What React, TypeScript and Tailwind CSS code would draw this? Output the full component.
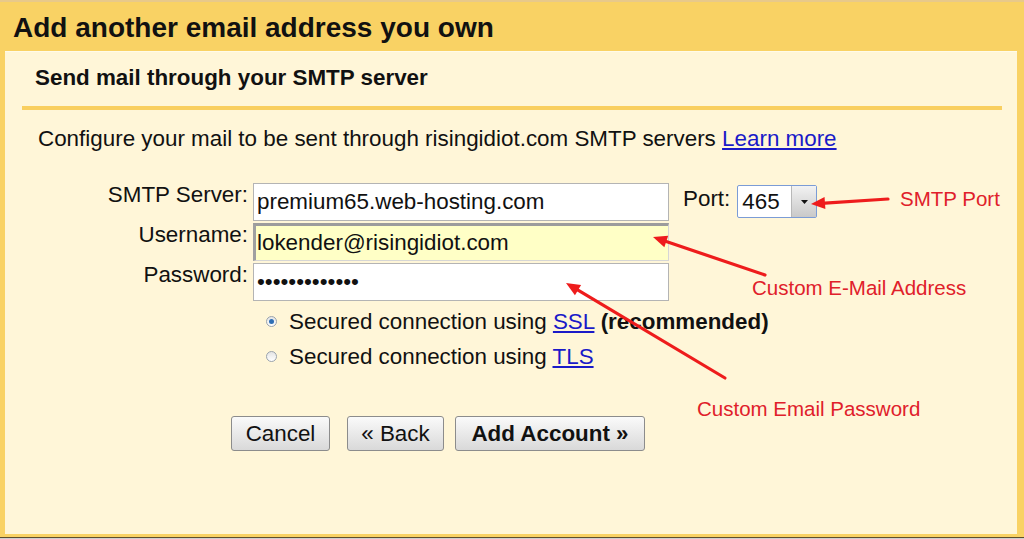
import type { ReactNode } from "react";

const font = "font-['Liberation_Sans',Arial,sans-serif]";

function Arrow({ x1, y1, x2, y2 }: { x1: number; y1: number; x2: number; y2: number }) {
  // arrow from (x1,y1) pointing at (x2,y2)
  const dx = x2 - x1;
  const dy = y2 - y1;
  const len = Math.hypot(dx, dy);
  const ux = dx / len;
  const uy = dy / len;
  const headLen = 14;
  const headW = 6;
  const bx = x2 - ux * headLen;
  const by = y2 - uy * headLen;
  const px = -uy * headW;
  const py = ux * headW;
  return (
    <g>
      <line x1={x1} y1={y1} x2={bx} y2={by} stroke="#ee1c1c" strokeWidth={3.2} strokeLinecap="round" />
      <polygon points={`${x2},${y2} ${bx + px},${by + py} ${bx - px},${by - py}`} fill="#ee1c1c" />
    </g>
  );
}

function Label({ children }: { children: ReactNode }) {
  return <div className="w-[243px] shrink-0 text-right leading-[24px] text-[#111]">{children}</div>;
}

function Radio({ checked }: { checked?: boolean }) {
  return (
    <span className="flex h-[11px] w-[11px] shrink-0 items-center justify-center rounded-full border border-[#9aa3ad] bg-gradient-to-b from-[#e4e4e4] to-[#ffffff]">
      {checked ? <span className="h-[5px] w-[5px] rounded-full bg-[#2f6fb5]" /> : null}
    </span>
  );
}

function Btn({ children, className = "" }: { children: ReactNode; className?: string }) {
  return (
    <button
      className={`h-[35px] rounded-[3px] border border-[#8c8c8c] bg-gradient-to-b from-[#fafafa] to-[#d9d9d9] text-[22.4px] leading-[33px] text-[#111] ${className}`}
    >
      {children}
    </button>
  );
}

export default function App() {
  return (
    <div className={`relative h-[539px] w-[1024px] overflow-hidden bg-[#cfcfcf] ${font} text-[22.4px] text-[#111]`}>
      <div className="h-[2px] bg-[#e8c98a]" />
      <div className="h-[49px] bg-[#f9d264] pl-[13px] pt-[1px] text-[28px] font-bold leading-[49px] text-[#111]">
        Add another email address you own
      </div>

      <div className="h-[486px] border-b-[3px] border-l-[5px] border-r-[7px] border-[#f9d264] bg-[#fff6d8]">
        <div className="border-t border-[#fffbe9] pl-[30px] pt-[13px] text-[22.4px] font-bold leading-[26px]">
          Send mail through your SMTP server
        </div>
        <div className="ml-[17px] mr-[15px] mt-[15px] h-[4px] bg-[#f9cf5f]" />
        <div className="mt-[16px] pl-[33px] leading-[26px]">
          Configure your mail to be sent through risingidiot.com SMTP servers{" "}
          <a href="#" className="text-[#1a1ac8] underline">
            Learn more
          </a>
        </div>

        <div className="mt-[31px] flex flex-col gap-[2px]">
          <div className="flex items-start">
            <Label>SMTP Server:</Label>
            <input
              readOnly
              value="premium65.web-hosting.com"
              className="ml-[5px] h-[38px] w-[416px] border border-[#b4b4b4] bg-white pl-[3px] text-[22.4px] text-[#111] outline-none"
            />
            <span className="ml-[14px] mt-[4px] leading-[24px]">Port:</span>
            <div className="ml-[7px] mt-[2px] flex h-[33px] w-[80px] rounded-[2px] border border-[#7b9cd6] bg-white">
              <span className="flex-1 pl-[4px] leading-[31px]">465</span>
              <span className="flex w-[25px] items-center justify-center border-l border-[#b8b8b8] bg-gradient-to-b from-[#f2f2f2] to-[#c9c9c9]">
                <svg width="7" height="4" viewBox="0 0 7 4">
                  <polygon points="0,0 7,0 3.5,4" fill="#111" />
                </svg>
              </span>
            </div>
          </div>
          <div className="flex items-start">
            <Label>Username:</Label>
            <input
              readOnly
              value="lokender@risingidiot.com"
              className="ml-[5px] h-[38px] w-[416px] border-b border-l-[3px] border-r border-t-[3px] border-b-[#d6d6d6] border-l-[#a0a0a0] border-r-[#d6d6d6] border-t-[#9c9c9c] bg-[#ffffc6] pl-[1px] text-[22.4px] text-[#111] outline-none"
            />
          </div>
          <div className="flex items-start">
            <Label>Password:</Label>
            <input
              readOnly
              value="•••••••••••••"
              className="ml-[5px] h-[38px] w-[416px] border border-[#b4b4b4] bg-white pl-[3px] text-[22.4px] text-[#111] outline-none"
            />
          </div>
        </div>

        <div className="mt-[3px] pl-[261px]">
          <div className="flex h-[35px] items-center leading-[35px]">
            <Radio checked />
            <span className="ml-[12px]">
              Secured connection using{" "}
              <a href="#" className="text-[#1a1ac8] underline">
                SSL
              </a>{" "}
              <b>(recommended)</b>
            </span>
          </div>
          <div className="flex h-[35px] items-center leading-[35px]">
            <Radio />
            <span className="ml-[12px]">
              Secured connection using{" "}
              <a href="#" className="text-[#1a1ac8] underline">
                TLS
              </a>
            </span>
          </div>
        </div>

        <div className="mt-[42px] flex pl-[226px]">
          <Btn className="w-[99px]">Cancel</Btn>
          <Btn className="ml-[17px] w-[97px]">« Back</Btn>
          <Btn className="ml-[11px] w-[190px] font-bold">Add Account »</Btn>
        </div>
      </div>
      <div className="h-[1px] bg-[#5e4e2e]" />

      {/* annotations drawn over the screenshot */}
      <svg className="pointer-events-none absolute left-0 top-0" width="1024" height="539">
        <Arrow x1={888} y1={199} x2={811} y2={204} />
        <Arrow x1={765} y1={275} x2={653} y2={237} />
        <Arrow x1={725} y1={378} x2={566} y2={283} />
      </svg>
      <div className="absolute left-[900px] top-[187px] text-[20.5px] leading-[24px] text-[#e0202a]">SMTP Port</div>
      <div className="absolute left-[752px] top-[276px] text-[20.5px] leading-[24px] text-[#e0202a]">
        Custom E-Mail Address
      </div>
      <div className="absolute left-[697px] top-[397px] text-[20.5px] leading-[24px] text-[#e0202a]">
        Custom Email Password
      </div>
    </div>
  );
}
